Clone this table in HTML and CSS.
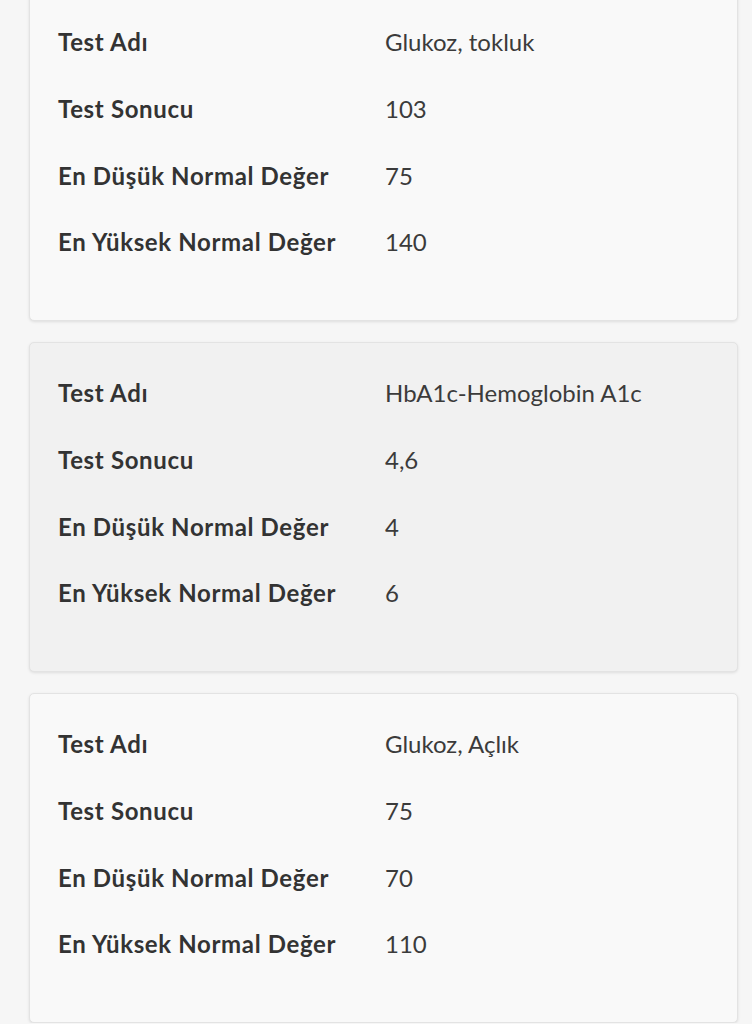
FILE: index.html
```html
<!DOCTYPE html>
<html lang="tr">
<head>
<meta charset="utf-8">
<title>Test Sonuçları</title>
<link rel="stylesheet" href="styles.css">
</head>
<body>
<div class="list">
  <div class="card">
    <div class="row"><span class="label">Test Adı</span><span class="value">Glukoz, tokluk</span></div>
    <div class="row"><span class="label">Test Sonucu</span><span class="value">103</span></div>
    <div class="row"><span class="label">En Düşük Normal Değer</span><span class="value">75</span></div>
    <div class="row"><span class="label">En Yüksek Normal Değer</span><span class="value">140</span></div>
  </div>
  <div class="card card-alt">
    <div class="row"><span class="label">Test Adı</span><span class="value">HbA1c-Hemoglobin A1c</span></div>
    <div class="row"><span class="label">Test Sonucu</span><span class="value">4,6</span></div>
    <div class="row"><span class="label">En Düşük Normal Değer</span><span class="value">4</span></div>
    <div class="row"><span class="label">En Yüksek Normal Değer</span><span class="value">6</span></div>
  </div>
  <div class="card">
    <div class="row"><span class="label">Test Adı</span><span class="value">Glukoz, Açlık</span></div>
    <div class="row"><span class="label">Test Sonucu</span><span class="value">75</span></div>
    <div class="row"><span class="label">En Düşük Normal Değer</span><span class="value">70</span></div>
    <div class="row"><span class="label">En Yüksek Normal Değer</span><span class="value">110</span></div>
  </div>
</div>
</body>
</html>
```

FILE: styles.css
```css
html, body {
  margin: 0;
  padding: 0;
  background: #f6f6f6;
}

body {
  font-family: Lato, "Liberation Sans", sans-serif;
  color: #333333;
  overflow: hidden;
}

.list {
  display: flex;
  flex-direction: column;
  gap: 21px;
  margin-top: -9px;
  padding: 0 14px 0 29px;
}

.card {
  box-sizing: border-box;
  height: 330px;
  padding: 17px 0 0 28px;
  background: #f9f9f9;
  border: 1px solid #e3e3e3;
  border-radius: 5px;
  box-shadow: 0 1px 3px rgba(0, 0, 0, 0.10);
}

.card-alt {
  background: #f1f1f1;
}

.row {
  display: grid;
  grid-template-columns: 327px 1fr;
  align-items: center;
  height: 66.67px;
  font-size: 24px;
  line-height: 30px;
}

.label {
  font-weight: 700;
  letter-spacing: 0.65px;
  color: #333333;
}

.value {
  font-weight: 400;
  color: #3b3b3b;
}
```
